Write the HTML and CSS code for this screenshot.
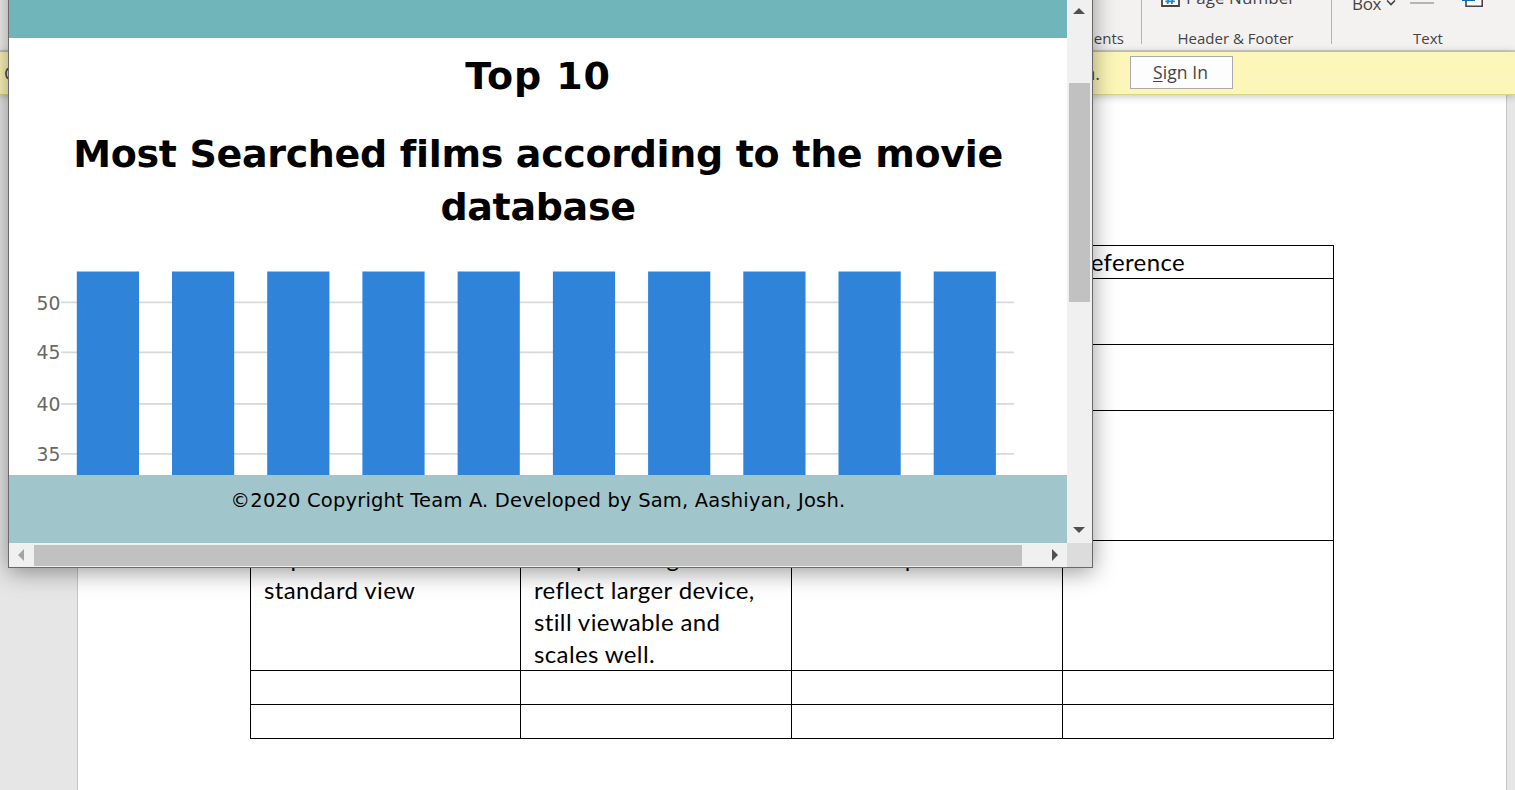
FILE: index.html
```html
<!DOCTYPE html>
<html lang="en">
<head>
<meta charset="utf-8">
<title>Document</title>
<link rel="stylesheet" href="styles.css">
</head>
<body>
<div class="editor">
  <header class="ribbon">
    <div class="group comments"><span class="label">Comments</span></div>
    <div class="group header-footer">
      <div class="tool">
        <svg class="page-icon" width="19" height="22" viewBox="0 0 19 22"><path d="M1 0V21H18V0" fill="#fff" stroke="#444" stroke-width="1.8"/><path d="M7.8 10L6.6 19M12 10L10.8 19M4.8 13H14.2M4.4 16.4H13.8" stroke="#1e86d0" stroke-width="1.8"/></svg>
        <span class="page-number">Page Number</span>
      </div>
      <span class="label">Header &amp; Footer</span>
    </div>
    <div class="group text-group">
      <div class="tool">
        <span class="box-text">Box</span>
        <svg class="chevron" width="10" height="6" viewBox="0 0 10 6"><path d="M1 .5L5 4.5L9 .5" fill="none" stroke="#444" stroke-width="1.6"/></svg>
        <i class="dash"></i>
        <svg class="object-icon" width="23" height="8" viewBox="0 0 23 8"><path d="M4 0V6.2H20.2V0" fill="#fff" stroke="#444" stroke-width="1.6"/><path d="M0 0H13V1H0Z" fill="#0f6cbd"/></svg>
      </div>
      <span class="label">Text</span>
    </div>
  </header>
  <div class="notice"><span class="notice-start">C</span><span class="notice-end">in.</span><button class="sign-in"><u>S</u>ign In</button></div>
  <main class="workspace">
    <div class="page">
      <div class="table">
        <div></div><div></div><div></div><div class="heading">Reference</div>
        <div></div><div></div><div></div><div></div>
        <div></div><div></div><div></div><div></div>
        <div></div><div></div><div></div><div></div>
        <div>Expand<br>standard view</div><div><span class="graph-line">Graph enlarged</span><br>reflect larger device,<br>still viewable and<br>scales well.</div><div>Clear shape</div><div></div>
        <div></div><div></div><div></div><div></div>
        <div></div><div></div><div></div><div></div>
      </div>
    </div>
  </main>
</div>
<section class="window">
  <div class="site">
    <div class="banner"></div>
    <div class="content">
      <h1 class="top">Top 10</h1>
      <h1 class="headline">Most Searched films according to the movie database</h1>
      <svg class="chart" width="1058" height="204" viewBox="9 271 1058 204">
        <g fill="#d9d9d9"><path d="M61 301.5H1014v1.8H61zM61 351.5H1014v1.8H61zM61 403H1014v1.8H61zM61 453H1014v1.8H61z"/></g>
        <g fill="#2f84da"><path d="M76.8 271.5h62.2V475h-62.2zM172 271.5h62.2V475H172zM267.2 271.5h62.2V475h-62.2zM362.4 271.5h62.2V475h-62.2zM457.6 271.5h62.2V475h-62.2zM552.9 271.5h62.2V475h-62.2zM648.1 271.5h62.2V475h-62.2zM743.3 271.5h62.2V475h-62.2zM838.5 271.5h62.2V475h-62.2zM933.7 271.5h62.2V475h-62.2z"/></g>
        <g class="ticks"><text x="60.5" y="309.5">50</text><text x="60.5" y="359.3">45</text><text x="60.5" y="410.8">40</text><text x="60.5" y="460.8">35</text></g>
      </svg>
    </div>
    <footer class="footer">©2020 Copyright Team A. Developed by Sam, Aashiyan, Josh.</footer>
  </div>
  <div class="vscroll">
    <svg class="up" width="12" height="6" viewBox="0 0 12 6"><path d="M0 6L6 0L12 6Z" fill="#505050"/></svg>
    <div class="vthumb"></div>
    <svg class="down" width="12" height="6" viewBox="0 0 12 6"><path d="M0 0L6 6L12 0Z" fill="#505050"/></svg>
  </div>
  <div class="hscroll">
    <svg width="6" height="12" viewBox="0 0 6 12"><path d="M6 0L0 6L6 12Z" fill="#a3a3a3"/></svg>
    <div class="hthumb"></div>
    <svg width="6" height="12" viewBox="0 0 6 12"><path d="M0 0L6 6L0 12Z" fill="#505050"/></svg>
  </div>
  <div class="corner"></div>
</section>
</body>
</html>
```
FILE: styles.css
```css
* { box-sizing: border-box; }
body { margin: 0; width: 1515px; height: 790px; overflow: hidden; background: #e6e6e6; font-family: "Open Sans", sans-serif; color: #444; }
.editor { height: 790px; display: flex; flex-direction: column; }
.ribbon { height: 52px; flex: none; background: #f3f2f1; border-bottom: 2px solid #cecdcb; display: flex; }
.group { position: relative; height: 44px; border-right: 1px solid #b5b3b1; display: flex; flex-direction: column; justify-content: flex-end; }
.comments { width: 1142px; align-items: flex-end; padding-right: 17px; }
.header-footer { width: 190px; align-items: center; padding-right: 2px; }
.text-group { width: 183px; align-items: center; border-right: 0; padding-left: 9px; }
.label { font-size: 15px; line-height: 20px; height: 16px; letter-spacing: 0; white-space: nowrap; }
.tool { position: absolute; left: 0; top: 0; width: 100%; height: 20px; }
.tool > * { position: absolute; }
.page-icon { left: 18.5px; top: -15px; }
.page-number { left: 44px; top: -14px; font-size: 17px; line-height: 24px; letter-spacing: .05px; white-space: nowrap; }
.box-text { left: 20px; top: -8px; font-size: 17px; line-height: 24px; letter-spacing: -.3px; }
.chevron { left: 54px; top: 0; }
.dash { left: 78px; top: 2px; width: 24px; height: 2px; background: #b5b5b5; }
.object-icon { left: 130px; top: 0; }
.notice { position: relative; height: 43px; flex: none; background: #fcf6b8; border-bottom: 1px solid #d8d684; box-shadow: 0 1px 8px rgba(0,0,0,.25); display: flex; align-items: center; font-size: 18px; }
.notice-start { width: 500px; padding-left: 4px; }
.notice-end { width: 630px; text-align: right; padding-right: 30px; }
.sign-in { width: 103px; height: 33px; margin-top: -1px; padding: 0 2px 1px 0; border: 1px solid #aaa9ad; background: #fdfdfd; color: #444; font: 17.5px "Open Sans", sans-serif; letter-spacing: .1px; }
.sign-in u { text-decoration-thickness: 1px; text-underline-offset: 2px; }
.workspace { flex: 1; padding: 0 8px 0 77px; }
.page { height: 100%; border: solid #c6c6c6; border-width: 0 1px; background: #fff; padding: 150px 0 0 172px; }
.table { display: grid; grid-template-columns: 270px 271px 271px 271px; grid-template-rows: 33px 66px 66px 130px 130px 34px 34px; width: 1084px; border: solid #000; border-width: 1px 0 0 1px; color: #000; font: 24px/32px Lato, sans-serif; letter-spacing: .37px; }
.table > div { border: solid #000; border-width: 0 1px 1px 0; padding: 1px 0 0 13px; white-space: nowrap; }
.table > .heading { padding-top: 0; line-height: 32px; }
.graph-line { padding-left: 2px; letter-spacing: .7px; }
.window { position: absolute; z-index: 1; left: 8px; top: -32px; width: 1085px; height: 600px; border: 1px solid #696969; background: #fff; box-shadow: 0 4px 22px rgba(0,0,0,.4); display: grid; grid-template-columns: 1058px 25px; grid-template-rows: 574px 24px; }
.site { display: flex; flex-direction: column; height: 574px; font-family: "DejaVu Sans", sans-serif; color: #000; }
.banner { height: 69px; flex: none; background: #70b5ba; }
.content { flex: 1; display: flex; flex-direction: column; }
h1 { margin: 0; font-size: 38px; line-height: 53px; text-align: center; letter-spacing: -.33px; }
.top { margin-top: 12px; letter-spacing: .9px; }
.headline { margin-top: 25px; padding: 0 50px; }
.chart { margin-top: auto; display: block; }
.ticks { font: 18.8px "DejaVu Sans", sans-serif; fill: #686868; text-anchor: end; }
.footer { height: 68px; flex: none; background: #a0c6cb; font-size: 19.5px; line-height: 51px; letter-spacing: .18px; text-align: center; white-space: nowrap; }
.vscroll { background: #f0f0f0; display: flex; flex-direction: column; align-items: flex-start; padding: 39px 0 0 2px; }
.vthumb { width: 21px; height: 219px; margin: 69px 0 225px; background: #c1c1c1; flex: none; }
.vscroll svg { flex: none; margin-left: 4px; }
.hscroll { background: #f0f0f0; display: flex; align-items: center; padding-left: 9px; }
.hthumb { width: 988px; height: 21px; margin: 1px 30px 0 10px; background: #c1c1c1; }
.corner { background: #dcdcdc; }
```
